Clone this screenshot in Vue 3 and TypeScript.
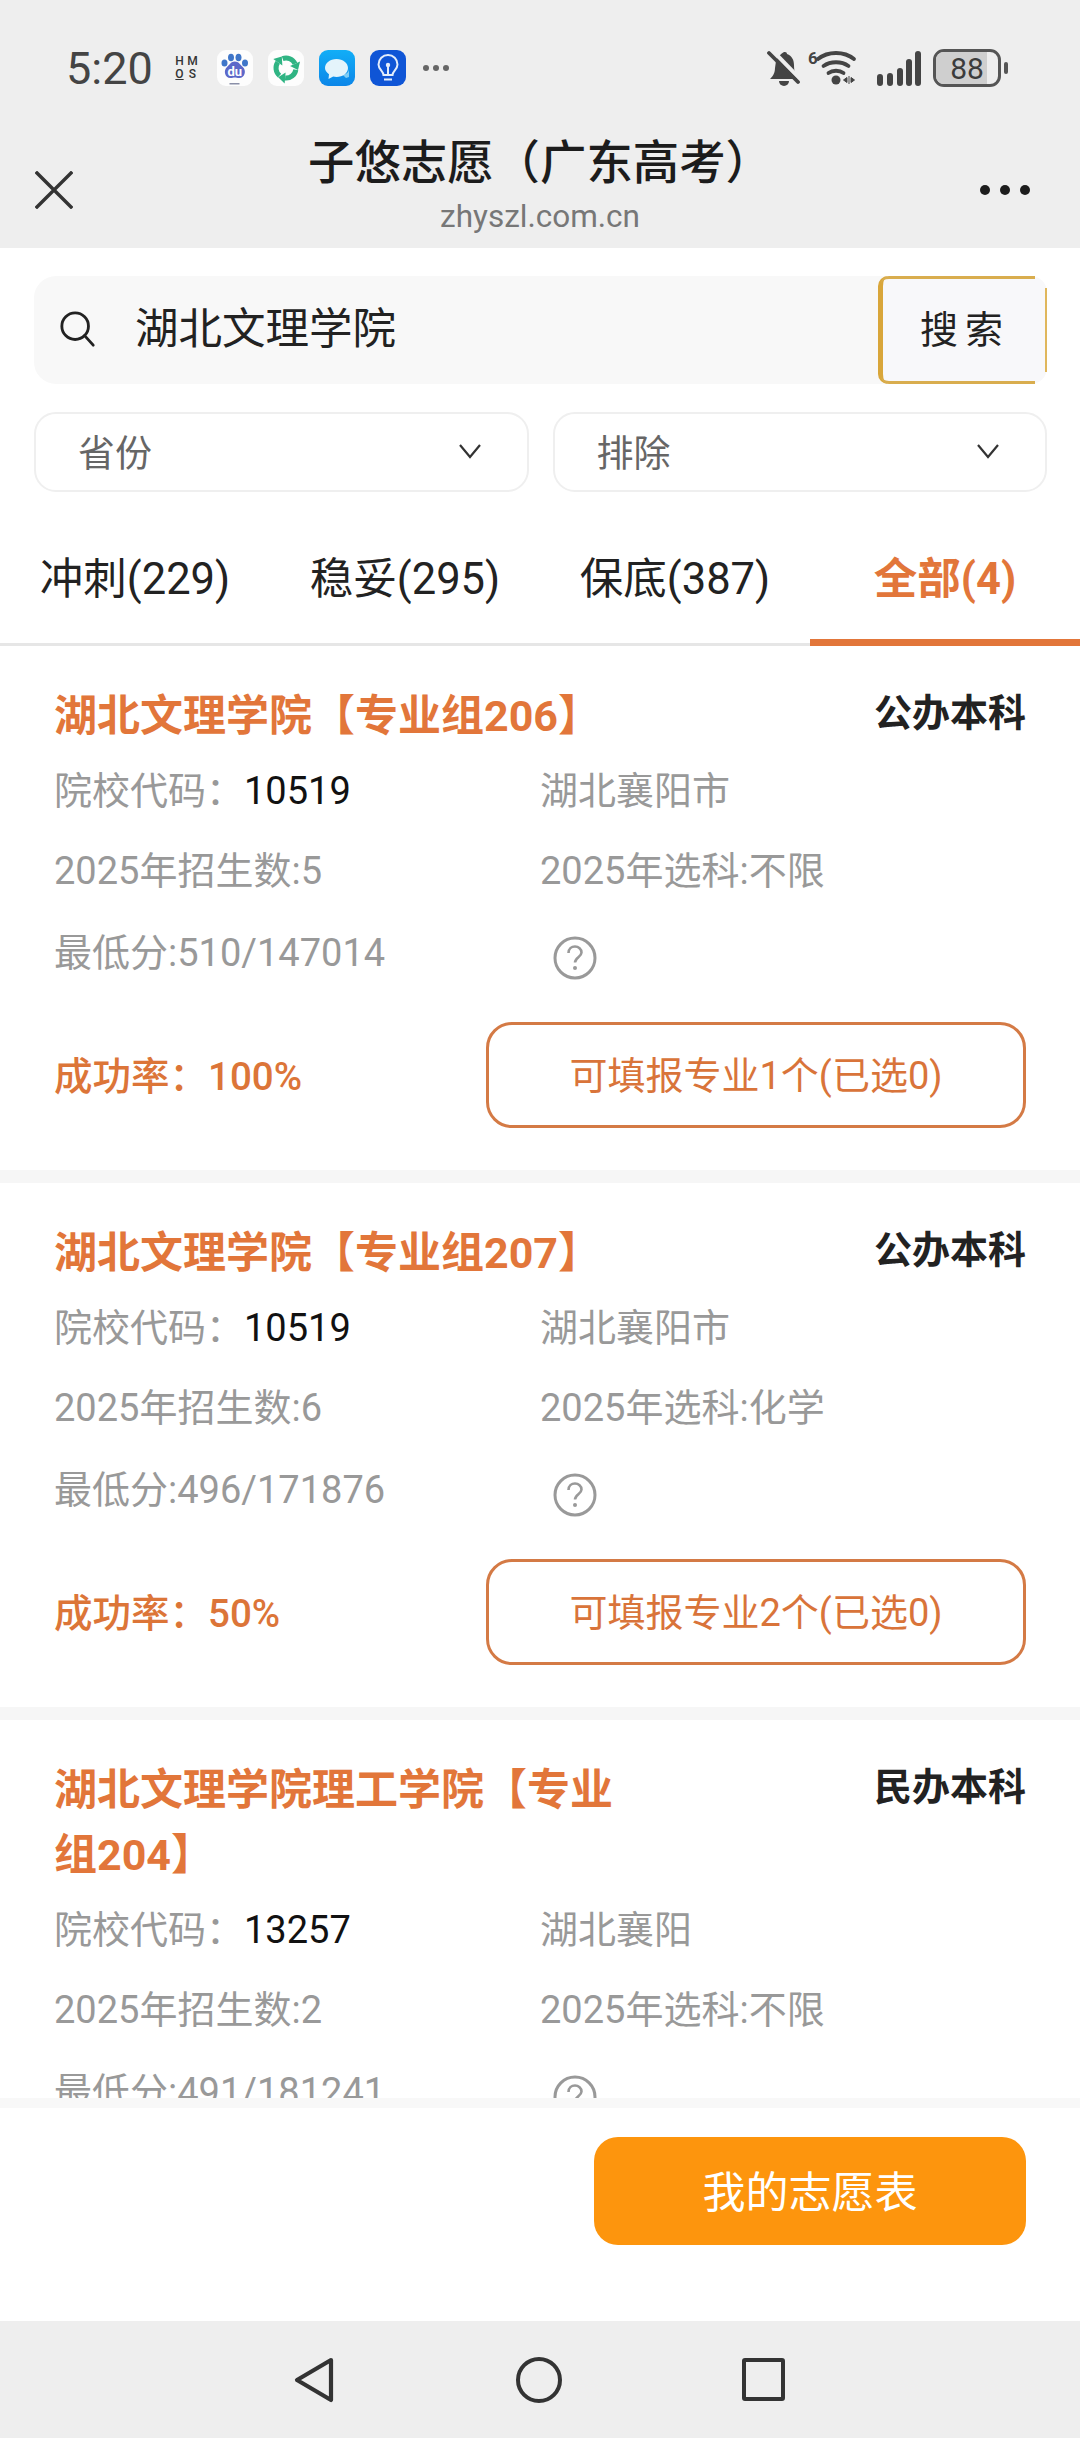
<script setup lang="ts">
interface School {
  name: string;
  kind: string;
  code: string;
  city: string;
  plan: number;
  subject: string;
  score: string;
  rate?: string;
  majors?: number;
}

const tabs = [
  { label: "冲刺(229)" },
  { label: "稳妥(295)" },
  { label: "保底(387)" },
  { label: "全部(4)", active: true },
];

// the third card runs under the bottom bar, so its footer is never seen
const schools: School[] = [
  { name: "湖北文理学院【专业组206】", kind: "公办本科", code: "10519", city: "湖北襄阳市", plan: 5, subject: "不限", score: "510/147014", rate: "100%", majors: 1 },
  { name: "湖北文理学院【专业组207】", kind: "公办本科", code: "10519", city: "湖北襄阳市", plan: 6, subject: "化学", score: "496/171876", rate: "50%", majors: 2 },
  { name: "湖北文理学院理工学院【专业组204】", kind: "民办本科", code: "13257", city: "湖北襄阳", plan: 2, subject: "不限", score: "491/181241" },
];
</script>

<template>
  <div class="page">
    <header class="top">
      <div class="status">
        <span class="time">5:20</span>
        <span class="hmos"><i>H</i><i>M</i><i class="under">O</i><i>S</i></span>
        <svg class="app" viewBox="0 0 36 36">
          <rect width="36" height="36" rx="9" fill="#fdfdfd" />
          <ellipse cx="7.500" cy="13" rx="3" ry="3.600" fill="#3f76c9" />
          <ellipse cx="14" cy="7.500" rx="3" ry="3.800" fill="#3f76c9" />
          <ellipse cx="21.500" cy="7.500" rx="3" ry="3.800" fill="#3f76c9" />
          <ellipse cx="28" cy="13" rx="3" ry="3.600" fill="#3f76c9" />
          <path d="M17.800 11.500c4 0 5 3 8 5.500 4 3.500 2 11-3.500 11-2.500 0-3-.5-4.500-.5s-2 .5-4.500.5C8 28 6 20.500 10 17c3-2.500 4-5.500 7.800-5.500z" fill="#5c68c9" />
          <text x="17.800" y="26" text-anchor="middle" class="du">du</text>
          <rect x="12.500" y="33" width="10" height="1.500" fill="#8a8fa8" />
        </svg>
        <svg class="app" viewBox="0 0 36 36">
          <rect width="36" height="36" rx="9" fill="#fdfdfd" />
          <g v-for="r in [0, 120, 240]" :key="r" :transform="`rotate(${r} 18 18)`">
            <path d="M14.600 8.600A10 10 0 0 1 27.060 13.770" fill="none" stroke="#2fb483" stroke-width="5" />
            <path d="M32.070 11.450L22.050 16.100 30 20.100z" fill="#2fb483" />
          </g>
        </svg>
        <svg class="app" viewBox="0 0 36 36">
          <defs>
            <linearGradient id="msg" x1="0" y1="0" x2="0" y2="1">
              <stop offset="0" stop-color="#12aef7" />
              <stop offset="1" stop-color="#0c86e8" />
            </linearGradient>
          </defs>
          <rect width="36" height="36" rx="9" fill="url(#msg)" />
          <path d="M24 25c4-1 6-3 6-6l0 8-3 1z" fill="#7fcdf5" />
          <path d="M17.500 9C24 9 29 13 29 18s-5 9-11.500 9c-1.200 0-2.300-.1-3.300-.4L9.500 29l.5-4.800C7.500 22.500 6 20.400 6 18c0-5 5-9 11.500-9z" fill="#e4f4fb" />
        </svg>
        <svg class="app" viewBox="0 0 36 36">
          <rect width="36" height="36" rx="9" fill="#0f55d6" />
          <path d="M13.500 25c0-3.500-5-5.500-5-10.500a9.500 9.500 0 0 1 19 0c0 5-5 7-5 10.500z" fill="none" stroke="#e3edfb" stroke-width="2" />
          <path d="M18 25v-8M14 29.500h8" stroke="#e3edfb" stroke-width="2" fill="none" />
          <circle cx="18" cy="15" r="2.200" fill="#e3edfb" />
        </svg>
        <span class="more-small"><i></i><i></i><i></i></span>
        <span class="status-right">
          <svg class="bell" viewBox="0 0 34 36">
            <path d="M9 11c2-5 5-7 8-9 1 0 3 0 3 2 5 2 7 6 7 11 0 6 1 9 3 11l1 3H3c2-2 5-5 5-11z" fill="#444" />
            <path d="M12 31a5 5 0 0 0 10 0z" fill="#444" />
            <path d="M6 1l28 29" stroke="#eee" stroke-width="4" />
            <path d="M2 3l29 29" stroke="#444" stroke-width="3.800" stroke-linecap="round" />
          </svg>
          <svg class="wifi" viewBox="0 0 52 38">
            <text x="0" y="15" class="six">6</text>
            <path d="M10 10c10-8 26-8 36 0" fill="none" stroke="#444" stroke-width="3.800" stroke-linecap="round" />
            <path d="M15.500 17c7-5 18-5 25 0" fill="none" stroke="#444" stroke-width="3.800" stroke-linecap="round" />
            <path d="M20.500 24c4-3 11-3 15 0" fill="none" stroke="#444" stroke-width="3.800" stroke-linecap="round" />
            <circle cx="28" cy="31" r="4.500" fill="#444" />
            <path d="M39 28.500l-3.500 2.500 3.500 2.500zM43 28.500l3.500 2.500-3.500 2.500zM41 27v8" fill="#444" stroke="#444" stroke-width="1" />
          </svg>
          <svg class="signal" viewBox="0 0 44 36">
            <g stroke="#444" stroke-width="6" stroke-linecap="round">
              <path d="M3 27v6M13 26v7M23 21v12M32 12v21M41 4v29" />
            </g>
          </svg>
          <span class="battery"><span class="level"></span><span class="num">88</span></span>
          <span class="nub"></span>
        </span>
      </div>
      <div class="nav">
        <svg class="close" viewBox="0 0 38 38">
          <path d="M2 2l34 34M36 2L2 36" stroke="#333" stroke-width="3.400" stroke-linecap="square" fill="none" />
        </svg>
        <div class="heading">
          <div class="title">子悠志愿（广东高考）</div>
          <div class="domain">zhyszl.com.cn</div>
        </div>
        <span class="dots"><i></i><i></i><i></i></span>
      </div>
    </header>

    <section class="search">
      <svg class="glass" viewBox="0 0 40 40">
        <circle cx="17" cy="17" r="14" fill="none" stroke="#222" stroke-width="3" />
        <path d="M27 27l9 10" stroke="#222" stroke-width="3" stroke-linecap="round" />
      </svg>
      <span class="keyword">湖北文理学院</span>
      <button class="search-btn" type="button">搜索</button>
    </section>

    <section class="filters">
      <div class="select" v-for="item in ['省份', '排除']" :key="item">
        <span>{{ item }}</span>
        <svg class="chev" viewBox="0 0 22 22"><path d="M1 5l10 12L21 5" fill="none" stroke="#333" stroke-width="2.200" /></svg>
      </div>
    </section>

    <nav class="tabs">
      <div class="tab" v-for="t in tabs" :key="t.label" :class="{ on: t.active }">{{ t.label }}</div>
    </nav>

    <main class="list">
      <article class="card" v-for="s in schools" :key="s.name">
        <div class="card-head">
          <h3>{{ s.name }}</h3>
          <span class="kind">{{ s.kind }}</span>
        </div>
        <div class="rows">
          <div><span>院校代码：</span><b>{{ s.code }}</b></div>
          <div>{{ s.city }}</div>
          <div>2025年招生数:{{ s.plan }}</div>
          <div>2025年选科:{{ s.subject }}</div>
          <div class="score">最低分:{{ s.score }}</div>
          <div class="help-cell">
            <svg class="help" viewBox="0 0 44 44">
              <circle cx="22" cy="22" r="20" fill="none" stroke="#999" stroke-width="3" />
              <path d="M15.500 17c0-4 3-6.500 6.500-6.500s6.500 2.500 6.500 6c0 4.500-6.500 5-6.500 10" fill="none" stroke="#999" stroke-width="2.600" />
              <circle cx="22" cy="32" r="2" fill="#999" />
            </svg>
          </div>
        </div>
        <div class="card-foot" v-if="s.rate">
          <span class="rate">成功率：{{ s.rate }}</span>
          <button class="pick" type="button">可填报专业{{ s.majors }}个(已选0)</button>
        </div>
      </article>
    </main>

    <footer class="actions">
      <button class="wish" type="button">我的志愿表</button>
    </footer>

    <div class="sysnav">
      <svg class="back" viewBox="0 0 40 46">
        <path d="M37 3L3 23l34 20z" fill="none" stroke="#333" stroke-width="4.200" stroke-linejoin="round" />
      </svg>
      <span class="home"></span>
      <span class="recent"></span>
    </div>
  </div>
</template>

<style>
html,
body {
  margin: 0;
  background: #fff;
}
</style>

<style scoped>
.page {
  width: 1080px;
  height: 2438px;
  display: flex;
  flex-direction: column;
  overflow: hidden;
  background: #fff;
  font-family: Roboto, "Noto Sans CJK SC", sans-serif;
  color: #222;
}

.top {
  height: 248px;
  background: #eee;
  flex: none;
}

.status {
  height: 136px;
  padding: 0 72px 0 66px;
  display: flex;
  align-items: center;
  box-sizing: border-box;
}

.time {
  font-size: 45px;
  color: #444;
  width: 107px;
  font-weight: 400;
}

.hmos {
  width: 26px;
  display: grid;
  grid-template-columns: 1fr 1fr;
  font-size: 12px;
  line-height: 13px;
  color: #333;
  text-align: center;
  margin-right: 18px;
}

.hmos i {
  font-style: normal;
  font-weight: 500;
}

.hmos .under {
  text-decoration: underline;
}

.app {
  width: 36px;
  height: 36px;
  margin-right: 15px;
  flex: none;
}

.du {
  font-size: 13px;
  font-weight: 700;
  fill: #fff;
  font-family: Roboto, sans-serif;
}

.more-small {
  margin-left: 2px;
  display: flex;
  gap: 4px;
}

.more-small i {
  width: 6px;
  height: 6px;
  border-radius: 50%;
  background: #666;
}

.status-right {
  margin-left: auto;
  display: flex;
  align-items: center;
}

.bell {
  width: 34px;
  height: 36px;
  margin-right: 7px;
}

.wifi {
  width: 52px;
  height: 38px;
  margin-right: 17px;
}

.six {
  font-size: 17px;
  font-weight: 700;
  fill: #444;
  font-family: Roboto, sans-serif;
}

.signal {
  width: 44px;
  height: 36px;
  margin-right: 12px;
}

.battery {
  position: relative;
  width: 68px;
  height: 38px;
  border: 3px solid #555;
  border-radius: 11px;
  box-sizing: border-box;
  overflow: hidden;
  display: flex;
  align-items: center;
  justify-content: center;
}

.level {
  position: absolute;
  left: 0;
  top: 0;
  bottom: 0;
  width: 82%;
  background: #cfcfcf;
}

.num {
  position: relative;
  font-size: 30px;
  color: #3c3c3c;
  font-weight: 400;
}

.nub {
  width: 4px;
  height: 12px;
  margin-left: 3px;
  border-radius: 2px;
  background: #555;
}

.nav {
  height: 112px;
  display: grid;
  grid-template-columns: 160px 1fr 160px;
}

.close {
  width: 38px;
  height: 38px;
  margin: 35px 0 0 35px;
}

.heading {
  text-align: center;
}

.title {
  font-size: 46.400px;
  line-height: 54px;
  color: #1c1c1c;
  font-weight: 500;
}

.domain {
  font-size: 31.500px;
  line-height: 40px;
  margin-top: 7px;
  color: #777;
}

.dots {
  justify-self: end;
  margin: 49px 50px 0 0;
  display: flex;
  gap: 10px;
}

.dots i {
  width: 10px;
  height: 10px;
  border-radius: 50%;
  background: #1c1c1c;
}

.search {
  margin: 28px 33px 0 34px;
  height: 108px;
  flex: none;
  display: flex;
  align-items: center;
  background: #f8f8f8;
  border-radius: 22px;
}

.glass {
  width: 38px;
  height: 38px;
  margin-left: 25px;
  margin-bottom: 2px;
}

.keyword {
  margin-left: 38px;
  padding-bottom: 10px;
  font-size: 43.500px;
  color: #222;
}

.search-btn {
  position: relative;
  margin-left: auto;
  width: 169px;
  height: 108px;
  padding: 0 0 8px;
  box-sizing: border-box;
  background: #f8f8fa;
  border: none;
  border-left: 5px solid #d9a63a;
  border-radius: 10px 16px 16px 10px;
  font: inherit;
  font-size: 38px;
  letter-spacing: 7px;
  color: #222;
}

.search-btn::before {
  content: "";
  position: absolute;
  left: -2px;
  right: 12px;
  top: 0;
  bottom: 0;
  border-top: 3px solid #d9ad4e;
  border-bottom: 3px solid #d9ad4e;
  border-radius: 8px 0 0 8px;
}

.search-btn::after {
  content: "";
  position: absolute;
  right: 0;
  top: 12px;
  bottom: 12px;
  width: 2px;
  background: #e0b75c;
}

.filters {
  margin: 28px 33px 0 34px;
  display: grid;
  grid-template-columns: 1fr 1fr;
  gap: 24px;
  flex: none;
}

.select {
  height: 80px;
  padding: 0 46px 2px 42px;
  box-sizing: border-box;
  border: 2px solid #efefef;
  border-radius: 22px;
  display: flex;
  align-items: center;
  justify-content: space-between;
  font-size: 37px;
  color: #666;
}

.chev {
  width: 22px;
  height: 22px;
}

.tabs {
  margin-top: 42px;
  height: 112px;
  flex: none;
  display: grid;
  grid-template-columns: 270px 270px 270px 270px;
  box-sizing: border-box;
  border-bottom: 3px solid #e6e6e6;
}

.tab {
  height: 112px;
  box-sizing: border-box;
  padding-bottom: 30px;
  display: flex;
  align-items: center;
  justify-content: center;
  font-size: 43.500px;
  color: #222;
}

.tab.on {
  padding-bottom: 23px;
  color: #e2763a;
  font-weight: 700;
  border-bottom: 7px solid #e2763a;
}

.list {
  flex: 1;
  min-height: 0;
  overflow: hidden;
  background: #f6f6f6;
}

.card {
  background: #fff;
  padding: 38px 54px 42px 54px;
  margin-bottom: 13px;
}

.card-head {
  display: flex;
  justify-content: space-between;
  align-items: flex-start;
}

h3 {
  margin: 0;
  width: 580px;
  font-size: 43px;
  line-height: 65px;
  font-weight: 700;
  color: #e2763a;
}

.kind {
  font-size: 38px;
  line-height: 58px;
  font-weight: 700;
  color: #222;
}

.rows {
  margin-top: 2px;
  display: grid;
  grid-template-columns: 486px 1fr;
  grid-template-rows: 80px 80px 82px;
  font-size: 38px;
  line-height: 80px;
  color: #999;
}

.rows b {
  font-weight: 400;
  color: #111;
}

.score {
  padding-top: 2px;
}

.help-cell {
  display: flex;
  align-items: center;
  padding: 12px 0 0 13px;
}

.help {
  width: 44px;
  height: 44px;
}

.card-foot {
  margin-top: 29px;
  display: flex;
  align-items: center;
  justify-content: space-between;
}

.rate {
  padding-bottom: 5px;
  font-size: 38.500px;
  font-weight: 500;
  color: #dc7538;
}

.pick {
  width: 540px;
  height: 106px;
  padding: 0 0 5px;
  box-sizing: border-box;
  background: #fff;
  border: 3px solid #d47a45;
  border-radius: 26px;
  font: inherit;
  font-size: 38px;
  color: #d9743a;
}

.actions {
  height: 223px;
  flex: none;
  box-sizing: border-box;
  padding: 29px 54px 0 0;
  display: flex;
  justify-content: flex-end;
  align-items: flex-start;
  background: #fff;
  border-top: 10px solid #f8f8f8;
}

.wish {
  width: 432px;
  height: 108px;
  padding: 0 0 4px;
  border: none;
  border-radius: 24px;
  background: #fd950d;
  color: #fff;
  font: inherit;
  font-size: 43px;
}

.sysnav {
  height: 117px;
  flex: none;
  background: #eee;
  display: grid;
  grid-template-columns: 294px 40px 182px 46px 180px 43px;
  align-items: center;
}

.back {
  grid-column: 2;
  width: 40px;
  height: 46px;
}

.home {
  grid-column: 4;
  width: 46px;
  height: 46px;
  box-sizing: border-box;
  border: 4px solid #333;
  border-radius: 50%;
}

.recent {
  grid-column: 6;
  width: 43px;
  height: 43px;
  box-sizing: border-box;
  border: 4px solid #333;
  border-radius: 3px;
}
</style>
